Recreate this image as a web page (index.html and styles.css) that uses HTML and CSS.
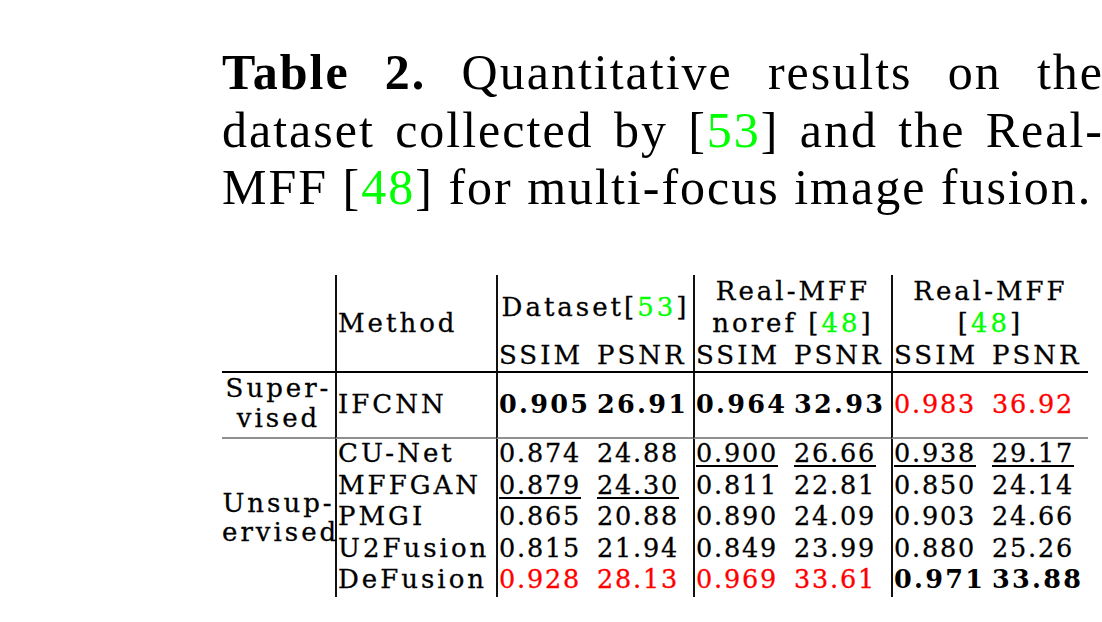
FILE: index.html
```html
<!DOCTYPE html>
<html lang="en">
<head>
    <meta charset="UTF-8">
    <meta name="viewport" content="width=device-width, initial-scale=1.0">
    <title>Table 2</title>
    <link rel="stylesheet" href="styles.css">
</head>
<body>
    <div class="page">
        <p class="caption">
            <span class="line just"><b>Table 2.</b> Quantitative results on the</span>
            <span class="line just">dataset collected by [<span class="cite">53</span>] and the Real-</span>
            <span class="line">MFF [<span class="cite">48</span>] for multi-focus image fusion.</span>
        </p>

        <table class="results">
            <colgroup>
                <col class="c-group">
                <col class="c-method">
                <col class="c-ssim"><col class="c-psnr">
                <col class="c-ssim"><col class="c-psnr2">
                <col class="c-ssim"><col class="c-psnr">
            </colgroup>
            <thead>
                <tr class="sets">
                    <th rowspan="2" class="group"></th>
                    <th rowspan="2" class="method">Method</th>
                    <th colspan="2" class="set">Dataset[<span class="cite">53</span>]</th>
                    <th colspan="2" class="set">Real-MFF<br>noref [<span class="cite">48</span>]</th>
                    <th colspan="2" class="set">Real-MFF<br>[<span class="cite">48</span>]</th>
                </tr>
                <tr class="metrics">
                    <th class="ssim">SSIM</th><th class="psnr">PSNR</th>
                    <th class="ssim">SSIM</th><th class="psnr">PSNR</th>
                    <th class="ssim">SSIM</th><th class="psnr">PSNR</th>
                </tr>
            </thead>
            <tbody class="sup">
                <tr>
                    <td class="group">Super-<br>vised</td>
                    <td class="method">IFCNN</td>
                    <td class="ssim num best">0.905</td><td class="psnr num best">26.91</td>
                    <td class="ssim num best">0.964</td><td class="psnr num best">32.93</td>
                    <td class="ssim num top">0.983</td><td class="psnr num top">36.92</td>
                </tr>
            </tbody>
            <tbody class="unsup">
                <tr>
                    <td class="group" rowspan="5">Unsup-<br>ervised</td>
                    <td class="method">CU-Net</td>
                    <td class="ssim num">0.874</td><td class="psnr num">24.88</td>
                    <td class="ssim num"><u>0.900</u></td><td class="psnr num"><u>26.66</u></td>
                    <td class="ssim num"><u>0.938</u></td><td class="psnr num"><u>29.17</u></td>
                </tr>
                <tr>
                    <td class="method">MFFGAN</td>
                    <td class="ssim num"><u>0.879</u></td><td class="psnr num"><u>24.30</u></td>
                    <td class="ssim num">0.811</td><td class="psnr num">22.81</td>
                    <td class="ssim num">0.850</td><td class="psnr num">24.14</td>
                </tr>
                <tr>
                    <td class="method">PMGI</td>
                    <td class="ssim num">0.865</td><td class="psnr num">20.88</td>
                    <td class="ssim num">0.890</td><td class="psnr num">24.09</td>
                    <td class="ssim num">0.903</td><td class="psnr num">24.66</td>
                </tr>
                <tr>
                    <td class="method">U2Fusion</td>
                    <td class="ssim num">0.815</td><td class="psnr num">21.94</td>
                    <td class="ssim num">0.849</td><td class="psnr num">23.99</td>
                    <td class="ssim num">0.880</td><td class="psnr num">25.26</td>
                </tr>
                <tr>
                    <td class="method">DeFusion</td>
                    <td class="ssim num top">0.928</td><td class="psnr num top">28.13</td>
                    <td class="ssim num top">0.969</td><td class="psnr num top">33.61</td>
                    <td class="ssim num best">0.971</td><td class="psnr num best">33.88</td>
                </tr>
            </tbody>
        </table>
    </div>
</body>
</html>
```

FILE: styles.css
```css
html, body {
    margin: 0;
    background: #fff;
    overflow: hidden;
}
.page {
    padding: 44px 0 0 222px;
    color: #000;
}
.cite { color: #00ff00; }

/* caption, three justified lines */
.caption {
    margin: 0;
    width: 882px;
    font-family: "Liberation Serif", serif;
    font-size: 50px;
    line-height: 57.5px;
    letter-spacing: 2px;
}
.caption .line { display: block; }
.caption .just {
    text-align: justify;
    text-align-last: justify;
}

/* results table */
.results {
    margin-top: 58.5px;
    width: 866px;
    table-layout: fixed;
    border-collapse: separate;
    border-spacing: 0;
    font-family: "DejaVu Serif", serif;
    font-size: 26px;
    letter-spacing: 3px;
    -webkit-text-stroke: 0.3px currentColor;
}
.c-group { width: 113px; }
.c-method { width: 161px; }
.c-ssim { width: 99px; }
.c-psnr { width: 98px; }
.c-psnr2 { width: 99px; }

.results th,
.results td {
    padding: 0;
    font-weight: normal;
    white-space: nowrap;
}
.results th {
    line-height: 32px;
    vertical-align: middle;
}
.results .method {
    border-left: 2px solid #111;
    padding-left: 1px;
    text-align: left;
}
.results .ssim,
.results .set {
    border-left: 2px solid #111;
}
.results .ssim { padding-left: 1px; text-align: left; }
.results .psnr { padding-left: 2px; text-align: left; }
.results .set { text-align: center; }
.results .group { text-align: center; }

thead .metrics th,
thead .group,
thead .method {
    border-bottom: 2px solid #000;
}

.num {
    font-size: 25.5px;
    letter-spacing: 1.8px;
}
.num.best {
    font-weight: bold;
    letter-spacing: 2.3px;
    -webkit-text-stroke: 0;
}
.num.top { color: #ff0000; }
.num u {
    text-decoration-thickness: 1.5px;
    text-underline-offset: 3px;
}

.sup td {
    line-height: 30px;
    vertical-align: middle;
    padding-bottom: 3px;
    border-bottom: 2px solid #8f8f8f;
}
.sup td.group {
    vertical-align: top;
    padding-bottom: 4px;
}

.unsup td {
    line-height: 28px;
    padding-bottom: 3.6px;
    vertical-align: baseline;
}
.unsup td.group {
    line-height: 29px;
    padding-bottom: 0;
    vertical-align: middle;
}
```
